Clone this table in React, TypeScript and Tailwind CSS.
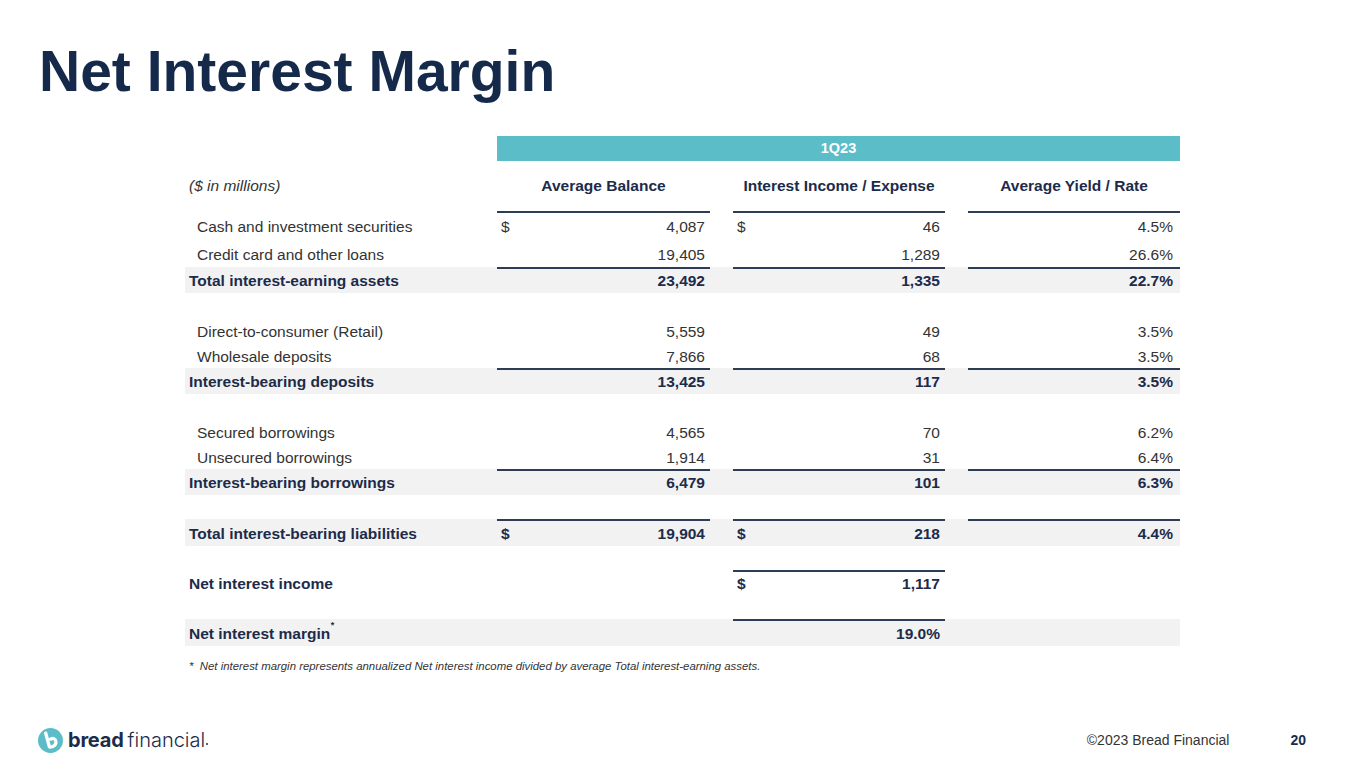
import React from "react";

type Cell = { v?: string; d?: boolean; line?: boolean };
type Row = {
  label?: string;
  bold?: boolean;
  band?: boolean;
  indent?: boolean;
  h: number;
  cells?: [Cell, Cell, Cell];
  sup?: boolean;
};

const rows: Row[] = [
  { label: "Cash and investment securities", indent: true, h: 29, cells: [{ v: "4,087", d: true, line: true }, { v: "46", d: true, line: true }, { v: "4.5%", line: true }] },
  { label: "Credit card and other loans", indent: true, h: 27, cells: [{ v: "19,405" }, { v: "1,289" }, { v: "26.6%" }] },
  { label: "Total interest-earning assets", bold: true, band: true, h: 26, cells: [{ v: "23,492", line: true }, { v: "1,335", line: true }, { v: "22.7%", line: true }] },
  { h: 25 },
  { label: "Direct-to-consumer (Retail)", indent: true, h: 25, cells: [{ v: "5,559" }, { v: "49" }, { v: "3.5%" }] },
  { label: "Wholesale deposits", indent: true, h: 25, cells: [{ v: "7,866" }, { v: "68" }, { v: "3.5%" }] },
  { label: "Interest-bearing deposits", bold: true, band: true, h: 26, cells: [{ v: "13,425", line: true }, { v: "117", line: true }, { v: "3.5%", line: true }] },
  { h: 25 },
  { label: "Secured borrowings", indent: true, h: 26, cells: [{ v: "4,565" }, { v: "70" }, { v: "6.2%" }] },
  { label: "Unsecured borrowings", indent: true, h: 24, cells: [{ v: "1,914" }, { v: "31" }, { v: "6.4%" }] },
  { label: "Interest-bearing borrowings", bold: true, band: true, h: 26, cells: [{ v: "6,479", line: true }, { v: "101", line: true }, { v: "6.3%", line: true }] },
  { h: 24 },
  { label: "Total interest-bearing liabilities", bold: true, band: true, h: 27, cells: [{ v: "19,904", d: true, line: true }, { v: "218", d: true, line: true }, { v: "4.4%", line: true }] },
  { h: 24 },
  { label: "Net interest income", bold: true, h: 25, cells: [{}, { v: "1,117", d: true, line: true }, {}] },
  { h: 24 },
  { label: "Net interest margin", bold: true, band: true, sup: true, h: 27, cells: [{}, { v: "19.0%", line: true }, {}] },
];

function NumCell({ c, bold, pr }: { c: Cell; bold?: boolean; pr: string }) {
  return (
    <div
      className={`flex items-center justify-between pl-[4px] ${pr} ${
        c.line ? "border-t-2 border-[#2e3c55]" : "border-t-2 border-transparent"
      } ${bold ? "font-bold text-[#1c2b4a]" : "text-[#333333]"}`}
    >
      <span>{c.d ? "$" : ""}</span>
      <span>{c.v ?? ""}</span>
    </div>
  );
}

function Logo() {
  return (
    <svg width="25" height="25" viewBox="0 0 24 24">
      <circle cx="12" cy="12" r="12" fill="#5bbdc8" />
      <path
        d="M7.4 5 L11 18.2 C13.8 18.6 17.4 16.6 17.2 13.2 C17 10.4 14.2 9.4 12.2 10.6"
        fill="none"
        stroke="#ffffff"
        strokeWidth="3.2"
        strokeLinecap="round"
        strokeLinejoin="round"
      />
    </svg>
  );
}

export default function App() {
  return (
    <div
      className="relative flex h-[768px] w-[1365px] flex-col overflow-hidden bg-white"
      style={{ fontFamily: '"Liberation Sans", Arial, sans-serif' }}
    >
      <h1 className="pl-[39px] pt-[43px] text-[57px] font-bold leading-none text-[#15294b]">
        Net Interest Margin
      </h1>

      <div className="ml-[185px] mt-[36px] w-[995px] text-[15.5px] leading-none">
        <div className="grid h-[25px] grid-cols-[312px_683px]">
          <div />
          <div className="flex items-center justify-center bg-[#5bbdc8] text-[14.5px] font-bold text-white">
            1Q23
          </div>
        </div>
        <div className="grid h-[50px] grid-cols-[312px_213px_23px_212px_23px_212px] items-center font-bold text-[#1c2b4a]">
          <div className="pl-[4px] font-normal italic text-[#333333]">($ in millions)</div>
          <div className="text-center">Average Balance</div>
          <div />
          <div className="text-center">Interest Income / Expense</div>
          <div />
          <div className="text-center">Average Yield / Rate</div>
        </div>
        {rows.map((r, i) => (
          <div
            key={i}
            className={`grid grid-cols-[312px_213px_23px_212px_23px_212px] ${r.band ? "bg-[#f2f2f2]" : ""}`}
            style={{ height: r.h }}
          >
            {r.cells ? (
              <>
                <div
                  className={`flex items-center border-t-2 border-transparent ${
                    r.indent ? "pl-[12px]" : "pl-[4px]"
                  } ${r.bold ? "font-bold text-[#1c2b4a]" : "text-[#333333]"}`}
                >
                  <span className="relative">
                    {r.label}
                    {r.sup && (
                      <span className="absolute -right-[4px] -top-[5px] text-[9px] font-bold">*</span>
                    )}
                  </span>
                </div>
                <NumCell c={r.cells[0]} bold={r.bold} pr="pr-[5px]" />
                <div />
                <NumCell c={r.cells[1]} bold={r.bold} pr="pr-[5px]" />
                <div />
                <NumCell c={r.cells[2]} bold={r.bold} pr="pr-[7px]" />
              </>
            ) : null}
          </div>
        ))}
        <div className="mt-[15px] pl-[4px] text-[11.4px] italic text-[#333333]">
          *&nbsp;&nbsp;Net interest margin represents annualized Net interest income divided by average Total interest-earning assets.
        </div>
      </div>

      <div className="mb-[13px] mt-auto flex h-[30px] items-center">
        <div className="flex items-center pl-[38px]">
          <Logo />
          <span
            className="ml-[5px] text-[20px] font-bold leading-none tracking-[-0.2px] text-[#1c2b4a]"
            style={{ fontFamily: "Inter, sans-serif" }}
          >
            bread
          </span>
          <span
            className="ml-[4px] text-[20px] font-light leading-none text-[#1c2b4a]"
            style={{ fontFamily: "Inter, sans-serif" }}
          >
            financial
          </span>
          <span className="ml-[1px] mt-[8px] h-[2px] w-[2px] rounded-full bg-[#1c2b4a]" />
        </div>
        <div className="ml-auto flex items-center">
          <span className="text-[14px] text-[#333333]">©2023 Bread Financial</span>
          <span className="ml-[61px] mr-[59px] text-[14px] font-bold text-[#1c2b4a]">20</span>
        </div>
      </div>
    </div>
  );
}
